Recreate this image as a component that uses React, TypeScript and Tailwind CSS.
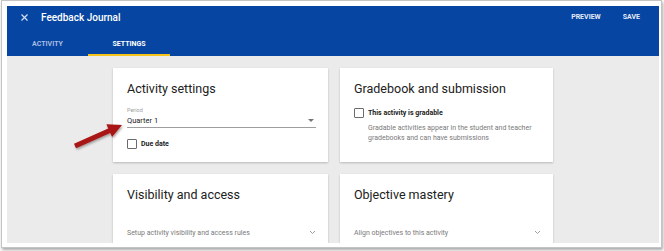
const Checkbox = () => (
  <span className="block h-[10px] w-[10px] shrink-0 rounded-[1px] border-[1.5px] border-[#6b6b6b] bg-white" />
)

const Chevron = () => (
  <svg width="7" height="5" viewBox="0 0 7 5" className="shrink-0">
    <path d="M1 1l2.5 2.5L6 1" fill="none" stroke="#9e9e9e" strokeWidth="1" />
  </svg>
)

const Card = ({ children }: { children: React.ReactNode }) => (
  <div className="bg-white pl-[14px] pt-[13px] shadow-[0_1px_2px_rgba(0,0,0,0.22)]">{children}</div>
)

const CardTitle = ({ children }: { children: React.ReactNode }) => (
  <h3 className="text-[12.5px] leading-[16px] font-normal text-[#212121]">{children}</h3>
)

const CollapsedRow = ({ text }: { text: string }) => (
  <div className="mt-[25px] flex h-[10px] items-center justify-between pr-[12px]">
    <span className="text-[7px] leading-[10px] text-[#7a7a7a]">{text}</span>
    <Chevron />
  </div>
)

export default function App() {
  return (
    <div className="relative h-[251px] w-[664px] overflow-hidden bg-white font-['Roboto',sans-serif]">
      <div className="ml-[1px] flex h-[248px] w-[661px] flex-col border border-[#c4c4c4] pb-[4px] pl-[5px] pr-[2px] pt-[5px] shadow-[1px_2px_3px_rgba(0,0,0,0.35)]">
        <div className="flex h-[50px] shrink-0 flex-col bg-[#0645a1]">
          <div className="mt-[1px] flex h-[20px] items-center pl-[14px] pr-[19px]">
            <svg width="7" height="7" viewBox="0 0 7 7" className="shrink-0">
              <path d="M0.5 0.5l6 6M6.5 0.5l-6 6" stroke="#d6e0f5" strokeWidth="1.2" />
            </svg>
            <span className="ml-[13px] text-[10px] font-medium text-white">Feedback Journal</span>
            <span className="ml-auto text-[7px] font-bold text-[#e4ecfa]">PREVIEW</span>
            <span className="ml-[22px] text-[7px] font-bold text-[#e4ecfa]">SAVE</span>
          </div>
          <div className="mt-auto flex h-[22px]">
            <div className="flex w-[81px] items-center justify-center border-b-2 border-transparent text-[7px] font-bold text-[#a9bde2]">
              ACTIVITY
            </div>
            <div className="flex w-[82px] items-center justify-center border-b-2 border-[#f5c31a] text-[7px] font-bold text-white">
              SETTINGS
            </div>
          </div>
        </div>
        <div className="flex-1 overflow-hidden bg-[#ebebeb] pt-[12px]">
          <div className="mx-auto grid w-[440px] grid-cols-[215px_213px] gap-[12px]">
            <Card>
              <CardTitle>Activity settings</CardTitle>
              <div className="pr-[12px]">
                <div className="mt-[9px] text-[5.5px] leading-[8px] text-[#9e9e9e]">Period</div>
                <div className="flex h-[14px] items-center justify-between border-b border-[#9e9e9e]">
                  <span className="text-[7.5px] text-[#212121]">Quarter 1</span>
                  <svg width="6" height="3" viewBox="0 0 6 3" className="mr-[2px]">
                    <path d="M0 0h6L3 3z" fill="#757575" />
                  </svg>
                </div>
              </div>
              <div className="mt-[11px] flex items-center gap-[4px] pb-[12px]">
                <Checkbox />
                <span className="text-[7px] font-bold text-[#212121]">Due date</span>
              </div>
            </Card>
            <Card>
              <CardTitle>Gradebook and submission</CardTitle>
              <div className="mt-[11px] flex items-center gap-[4px]">
                <Checkbox />
                <span className="text-[7px] font-bold text-[#212121]">This activity is gradable</span>
              </div>
              <p className="mt-[4px] pb-[17px] pl-[14px] pr-[12px] text-[7px] leading-[10px] text-[#7a7a7a]">
                Gradable activities appear in the student and teacher gradebooks and can have submissions
              </p>
            </Card>
            <Card>
              <CardTitle>Visibility and access</CardTitle>
              <CollapsedRow text="Setup activity visibility and access rules" />
              <div className="h-[20px]" />
            </Card>
            <Card>
              <CardTitle>Objective mastery</CardTitle>
              <CollapsedRow text="Align objectives to this activity" />
              <div className="h-[20px]" />
            </Card>
          </div>
        </div>
      </div>
      <svg
        className="pointer-events-none absolute left-0 top-0"
        width="664"
        height="251"
        viewBox="0 0 664 251"
      >
        <defs>
          <filter id="sh" x="-20%" y="-20%" width="140%" height="140%">
            <feDropShadow dx="1" dy="1.5" stdDeviation="1" floodColor="#000" floodOpacity="0.35" />
          </filter>
        </defs>
        <polygon
          points="74,143.7 108.2,128.4 106.4,124.3 122,125 112.1,137.1 110.2,133 76,148.3"
          fill="#a81414"
          filter="url(#sh)"
        />
      </svg>
    </div>
  )
}
